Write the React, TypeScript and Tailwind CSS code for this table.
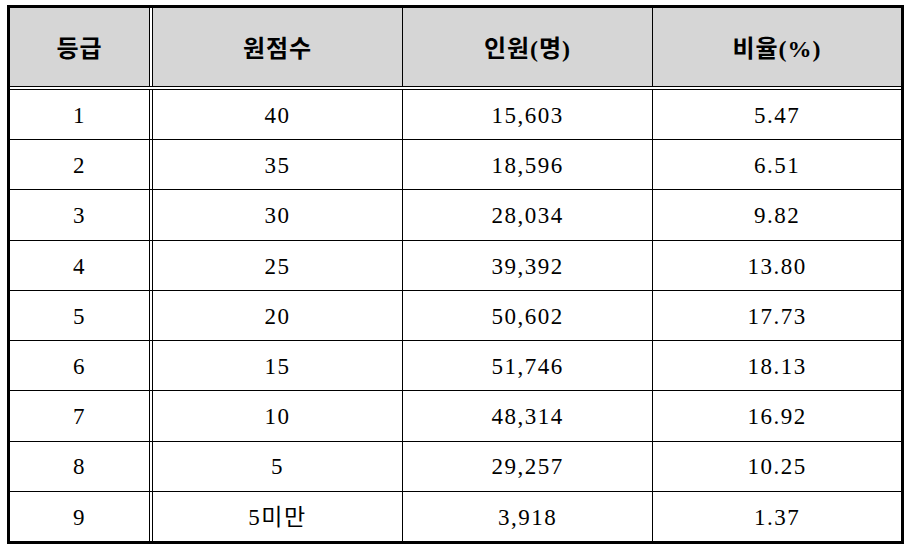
import React from "react";

const rows: [string, string, string, string][] = [
  ["1", "40", "15,603", "5.47"],
  ["2", "35", "18,596", "6.51"],
  ["3", "30", "28,034", "9.82"],
  ["4", "25", "39,392", "13.80"],
  ["5", "20", "50,602", "17.73"],
  ["6", "15", "51,746", "18.13"],
  ["7", "10", "48,314", "16.92"],
  ["8", "5", "29,257", "10.25"],
  ["9", "5미만", "3,918", "1.37"],
];

const font = { fontFamily: '"Liberation Serif", "Noto Sans CJK KR", serif' };

function Row({ cells, header }: { cells: string[]; header?: boolean }) {
  const txt = header
    ? "text-[24px] font-bold tracking-[1px] text-black pt-[3px]"
    : "text-[23px] tracking-[1.5px] text-black pt-[3px]";
  return (
    <div className={`flex flex-1 ${header ? "bg-[#d6d6d6]" : "bg-white"}`}>
      <div className={`w-[139px] flex items-center justify-center ${txt}`}>{cells[0]}</div>
      <div className="w-[4px] border-x border-black bg-white" />
      <div className={`w-[249px] flex items-center justify-center ${txt}`}>{cells[1]}</div>
      <div className={`w-[250px] border-l border-black flex items-center justify-center ${txt}`}>{cells[2]}</div>
      <div className={`flex-1 border-l border-black flex items-center justify-center ${txt}`}>{cells[3]}</div>
    </div>
  );
}

export default function App() {
  return (
    <div className="w-[909px] h-[550px] bg-white pt-[5px] pl-[7px]" style={font}>
      <div className="w-[897px] h-[539px] border-[3px] border-black flex flex-col">
        <div className="h-[78px] flex">
          <Row header cells={["등급", "원점수", "인원(명)", "비율(%)"]} />
        </div>
        <div className="h-[4px] border-y border-black bg-white" />
        <div className="flex-1 flex flex-col">
          {rows.map((r, i) => (
            <div key={i} className={`flex-1 flex ${i > 0 ? "border-t border-black" : ""}`}>
              <Row cells={r} />
            </div>
          ))}
        </div>
      </div>
    </div>
  );
}
